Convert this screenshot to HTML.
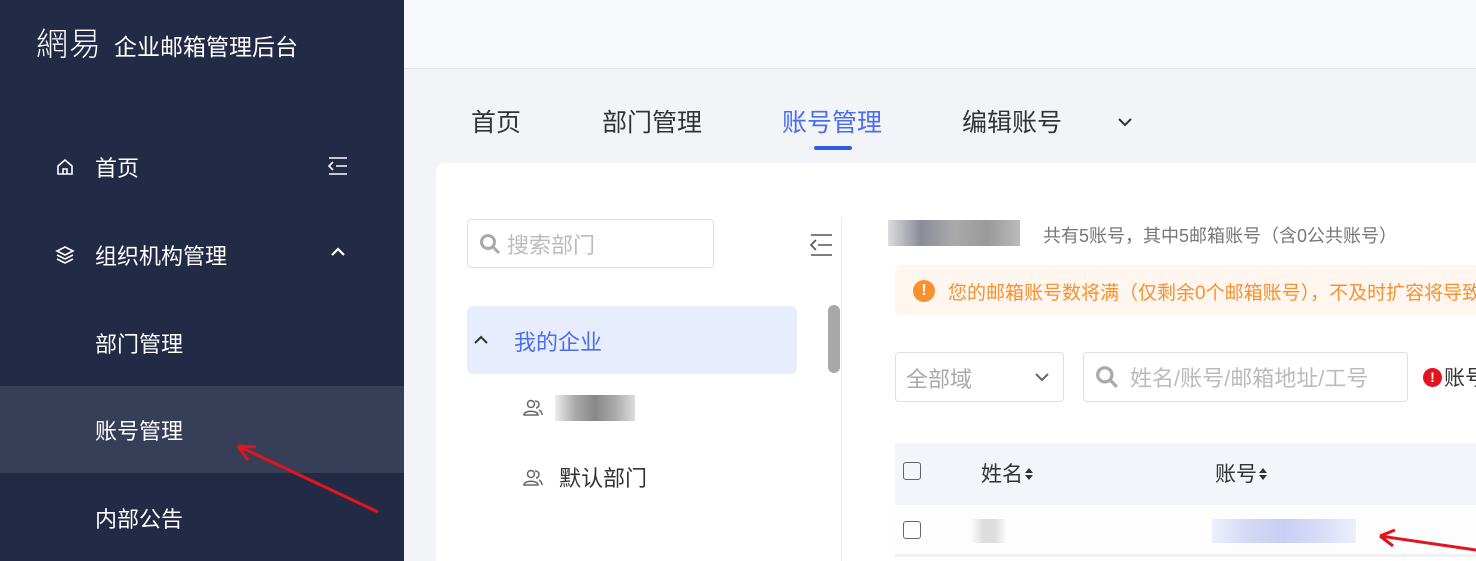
<!DOCTYPE html>
<html><head><meta charset="utf-8"><style>
*{margin:0;padding:0;box-sizing:border-box}
body{width:1476px;height:561px;overflow:hidden;position:relative;background:#f3f4f7;font-family:"Liberation Sans","Noto Sans CJK SC",sans-serif}
.a{position:absolute;white-space:nowrap}
.sb{left:0;top:0;width:404px;height:561px;background:#232a45;color:#fff}
.si{font-size:22px;color:#fff}
.so{display:inline-block;width:10px;height:14px;vertical-align:0px;margin-left:1px}
</style></head><body>
<div class="a sb">
  <div class="a" style="left:36px;top:19px;font-size:32px;font-family:'Noto Sans CJK TC',sans-serif;font-weight:300;letter-spacing:1px">網易</div>
  <div class="a" style="left:114px;top:28px;font-size:23px">企业邮箱管理后台</div>
  <svg class="a" style="left:55px;top:157px" width="20" height="20" viewBox="0 0 20 20" fill="none" stroke="#fff" stroke-width="1.6"><path d="M3 9L10 3L17 9V17H3Z M8 17V12H12V17"/></svg>
  <div class="a si" style="left:95px;top:151px">首页</div>
  <svg class="a" style="left:328px;top:156px" width="20" height="20" viewBox="0 0 20 20" stroke="#fff" stroke-width="1.6" fill="none"><path d="M1 2H19M8 10H19M1 18H19M5 6L1 10L5 14"/></svg>
  <svg class="a" style="left:55px;top:245px" width="20" height="20" viewBox="0 0 20 20" fill="none" stroke="#fff" stroke-width="1.6"><path d="M10 2L18 6L10 10L2 6Z M2 10L10 14L18 10 M2 14L10 18L18 14"/></svg>
  <div class="a si" style="left:95px;top:239px">组织机构管理</div>
  <svg class="a" style="left:330px;top:246px" width="16" height="12" viewBox="0 0 16 12" fill="none" stroke="#fff" stroke-width="2.2"><path d="M2 9L8 3L14 9"/></svg>
  <div class="a si" style="left:95px;top:327px">部门管理</div>
  <div class="a" style="left:0;top:386px;width:404px;height:87px;background:#373e57"></div>
  <div class="a si" style="left:95px;top:414px">账号管理</div>
  <div class="a si" style="left:95px;top:502px">内部公告</div>
</div>
<div class="a" style="left:404px;top:0;width:1072px;height:69px;background:#f7f8fa;border-bottom:1px solid #e4e6ec"></div>
<div class="a" style="left:471px;top:103px;font-size:25px;color:#333">首页</div>
<div class="a" style="left:602px;top:103px;font-size:25px;color:#333">部门管理</div>
<div class="a" style="left:782px;top:103px;font-size:25px;color:#4a6ef0">账号管理</div>
<div class="a" style="left:814px;top:146px;width:38px;height:4px;background:#2a5ce6;border-radius:2px"></div>
<div class="a" style="left:962px;top:103px;font-size:25px;color:#333">编辑账号</div>
<svg class="a" style="left:1117px;top:116px" width="16" height="12" viewBox="0 0 16 12" fill="none" stroke="#333" stroke-width="2"><path d="M2 3L8 9L14 3"/></svg>
<div class="a" style="left:436px;top:163px;width:1040px;height:398px;background:#fff;border-radius:8px 0 0 0"></div>
<div class="a" style="left:467px;top:219px;width:247px;height:49px;border:1px solid #dcdfe6;border-radius:4px"></div>
<svg class="a" style="left:479px;top:233px" width="22" height="22" viewBox="0 0 22 22" fill="none" stroke="#aaa" stroke-width="3"><circle cx="9" cy="9" r="6.5"/><path d="M14 14L20 20"/></svg>
<div class="a" style="left:507px;top:228px;font-size:22px;color:#bbb">搜索部门</div>
<svg class="a" style="left:810px;top:233px" width="23" height="23" viewBox="0 0 23 23" stroke="#555" stroke-width="1.6" fill="none"><path d="M1 2H22M8 12H22M1 22H22M6 7L1 12L6 17"/></svg>
<div class="a" style="left:841px;top:218px;width:1px;height:343px;background:#e8e8ec"></div>
<div class="a" style="left:828px;top:305px;width:12px;height:68px;background:#a8a8a8;border-radius:6px"></div>
<div class="a" style="left:467px;top:306px;width:330px;height:68px;background:#e7edfc;border-radius:6px"></div>
<svg class="a" style="left:473px;top:334px" width="16" height="12" viewBox="0 0 16 12" fill="none" stroke="#333" stroke-width="2"><path d="M2 9L8 3L14 9"/></svg>
<div class="a" style="left:514px;top:325px;font-size:22px;color:#4a6ef0">我的企业</div>
<svg class="a" style="left:523px;top:399px" width="20" height="18" viewBox="0 0 20 18" fill="none" stroke="#666" stroke-width="1.5"><circle cx="8" cy="5" r="3.5"/><path d="M1 16C1 11 15 11 15 16Z M12 2A3 3 0 0 1 13 9 M16 11C18 12 19 14 19 16"/></svg>
<div class="a" style="left:555px;top:395px;width:80px;height:26px;background:linear-gradient(90deg,#eee,#aaa,#888,#aaa,#ddd)"></div>
<svg class="a" style="left:523px;top:469px" width="20" height="18" viewBox="0 0 20 18" fill="none" stroke="#666" stroke-width="1.5"><circle cx="8" cy="5" r="3.5"/><path d="M1 16C1 11 15 11 15 16Z M12 2A3 3 0 0 1 13 9 M16 11C18 12 19 14 19 16"/></svg>
<div class="a" style="left:559px;top:461px;font-size:22px;color:#333">默认部门</div>
<div class="a" style="left:888px;top:220px;width:132px;height:26px;background:linear-gradient(90deg,#ddd,#8a8c99,#aaa,#999,#bbb)"></div>
<div class="a" style="left:1043px;top:222px;font-size:18px;color:#777">共有5账号，其中5邮箱账号（含0公共账号）</div>
<div class="a" style="left:895px;top:265px;width:581px;height:50px;background:#fff6f0;border-radius:6px 0 0 6px"></div>
<div class="a" style="left:913px;top:280px;width:22px;height:22px;border-radius:50%;background:#f7912e;color:#fff;font-size:16px;font-weight:bold;text-align:center;line-height:22px">!</div>
<div class="a" style="left:948px;top:278px;font-size:19px;color:#f7912e">您的邮箱账号数将满（仅剩余0个邮箱账号），不及时扩容将导致</div>
<div class="a" style="left:895px;top:352px;width:169px;height:50px;border:1px solid #dcdfe6;border-radius:4px"></div>
<div class="a" style="left:906px;top:362px;font-size:22px;color:#aaa">全部域</div>
<svg class="a" style="left:1034px;top:372px" width="16" height="10" viewBox="0 0 16 10" fill="none" stroke="#666" stroke-width="2"><path d="M2 2L8 8L14 2"/></svg>
<div class="a" style="left:1083px;top:352px;width:325px;height:50px;border:1px solid #dcdfe6;border-radius:4px"></div>
<svg class="a" style="left:1095px;top:365px" width="24" height="24" viewBox="0 0 22 22" fill="none" stroke="#aaa" stroke-width="3"><circle cx="9" cy="9" r="6.5"/><path d="M14 14L20 20"/></svg>
<div class="a" style="left:1130px;top:361px;font-size:22px;color:#bbb">姓名/账号/邮箱地址/工号</div>
<div class="a" style="left:1423px;top:368px;width:19px;height:19px;border-radius:50%;background:#e4141e;color:#fff;font-size:14px;font-weight:bold;text-align:center;line-height:19px">!</div>
<div class="a" style="left:1444px;top:362px;font-size:21px;color:#333">账号</div>
<div class="a" style="left:895px;top:443px;width:581px;height:62px;background:#f3f5fa"></div>
<div class="a" style="left:903px;top:462px;width:18px;height:18px;border:1.5px solid #666;border-radius:3px"></div>
<div class="a" style="left:981px;top:458px;font-size:21px;color:#333">姓名<svg class="so" viewBox="0 0 10 14"><path d="M1 6L5 1L9 6Z M1 8L5 13L9 8Z" fill="#333"/></svg></div>
<div class="a" style="left:1215px;top:458px;font-size:21px;color:#333">账号<svg class="so" viewBox="0 0 10 14"><path d="M1 6L5 1L9 6Z M1 8L5 13L9 8Z" fill="#333"/></svg></div>
<div class="a" style="left:895px;top:505px;width:581px;height:52px;background:#fdfdfe;border-bottom:3px solid #f0f1f5"></div>
<div class="a" style="left:903px;top:521px;width:18px;height:18px;border:1.5px solid #666;border-radius:3px"></div>
<div class="a" style="left:972px;top:519px;width:34px;height:24px;background:linear-gradient(90deg,#fafafa,#ddd,#ddd,#fafafa)"></div>
<div class="a" style="left:1212px;top:519px;width:144px;height:24px;background:linear-gradient(90deg,#eef0fb,#d4d8f5,#c9cef3,#d8dcf7,#eef0fb)"></div>
<svg class="a" style="left:0;top:0" width="1476" height="561" fill="none" stroke="#e3141c" stroke-width="3">
<path d="M378 512L238 446 M238 446L256 447 M238 446L248 460"/>
<path d="M1476 550L1380 536 M1380 536L1395 530 M1380 536L1393 546"/>
</svg>
</body></html>
